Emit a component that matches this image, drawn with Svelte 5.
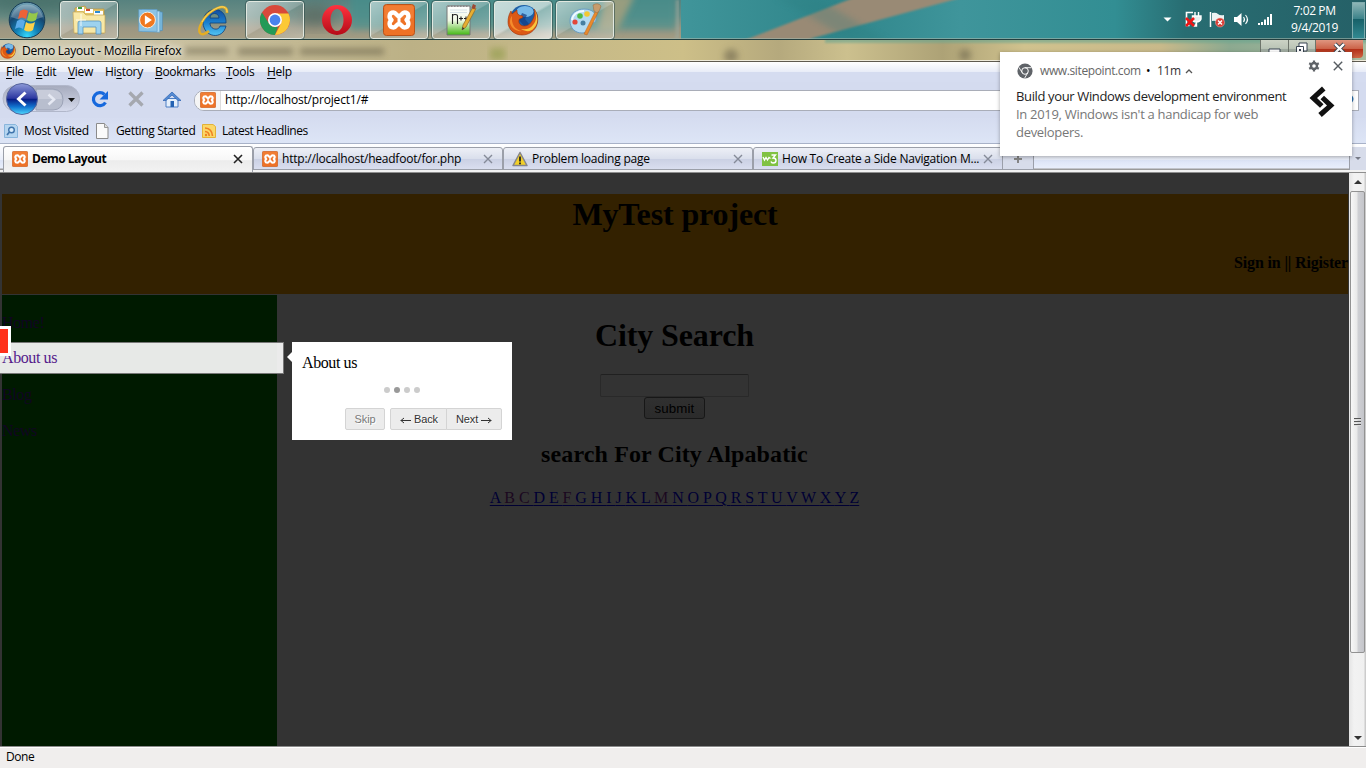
<script>
  const menus = [
    ['', 'F', 'ile', 30], ['', 'E', 'dit', 32], ['', 'V', 'iew', 37], ['Hi', 's', 'tory', 50],
    ['', 'B', 'ookmarks', 71], ['', 'T', 'ools', 41], ['', 'H', 'elp', 40]
  ];
  const letters = 'ABCDEFGHIJKLMNOPQRSTUVWXYZ'.split('');
  const visited = ['B', 'C', 'F', 'M'];
  const tasks = ['explorer', 'wmp', 'ie', 'chrome', 'opera', 'xampp', 'npp', 'firefox', 'paint'];
  const running = ['explorer', 'chrome', 'xampp', 'npp', 'firefox', 'paint'];
  const tabs = [
    { icon: 'xampp', title: 'http://localhost/headfoot/for.php' },
    { icon: 'warn', title: 'Problem loading page' },
    { icon: 'w3', title: 'How To Create a Side Navigation M...' }
  ];
</script>

{#snippet xampp(s)}
  <svg width={s} height={s} viewBox="0 0 32 32">
    <rect x=".5" y=".5" width="31" height="31" rx="3" fill="#ee7226" stroke="#b9531a" />
    <rect x="1.500" y="1.500" width="29" height="13" rx="2" fill="#f58b45" opacity=".45" />
    <path d="M10.500 8.500c-4.500 0-5 5-2 7.500c-3 2.500-2.500 7.500 2 7.500c3 0 2.500-3.500 5.500-3.500s2.500 3.500 5.500 3.500c4.500 0 5-5 2-7.500c3-2.500 2.500-7.500-2-7.500c-3 0-2.500 3.500-5.500 3.500s-2.500-3.500-5.500-3.500z" fill="none" stroke="#fff" stroke-width="4.400" stroke-linejoin="round" />
    <path d="M16 12v8" stroke="#fff" stroke-width="3" />
  </svg>
{/snippet}

{#snippet firefox(s)}
  <svg width={s} height={s} viewBox="0 0 32 32">
    <circle cx="17" cy="15" r="14" fill="#1d5fa6" />
    <ellipse cx="18" cy="7.500" rx="8.500" ry="5.500" fill="#76b9e8" />
    <path d="M15 9l5 2l-2 4l4 5l-4 3l-6-7z" fill="#123d83" opacity=".7" />
    <path d="M27 5c4 5 5 12 2 18c-3 5-8 8-14 8C7 31 1 25 1 18c0-4 1-8 3-11l1 3l5-4c0 2 0 4 2 5c1 1 4 0 4 2c-1 2-4 1-4 3c-1 3 2 6 5 6c5 0 7-3 9-7c2-4 2-7 1-10z" fill="#dc5915" stroke="#9e3108" stroke-width=".6" />
    <path d="M27 5c3 5 3 12-1 16c-3 4-7 5-12 4c5 3 10 3 13-1c5-5 4-13 0-19z" fill="#f7c63e" />
    <path d="M5 12c-1 8 3 14 10 15c-6 1-12-4-12-9c0-3 1-5 2-6z" fill="#f58c2c" />
  </svg>
{/snippet}

{#snippet taskIcon(name)}
  {#if name === 'xampp'}
    {@render xampp(32)}
  {:else if name === 'firefox'}
    {@render firefox(32)}
  {:else if name === 'explorer'}
    <svg width="34" height="32" viewBox="0 0 34 32">
      <path d="M3 4l10-2l2 3h17v24H3z" fill="#e5c566" stroke="#b79440" stroke-width=".7" />
      <path d="M5 3h7v4H5z" fill="#fff" /><path d="M6 3h4v2H6z" fill="#3f9e40" />
      <path d="M13 5h8v4h-8z" fill="#fff" /><path d="M14 5h4v2h-4z" fill="#d34a2d" />
      <path d="M22 7h9v4h-9z" fill="#fff" /><path d="M23 7h5v2h-5z" fill="#2e8bd0" />
      <path d="M1 8h10l3 3h19v18H2z" fill="#f8e8a6" stroke="#c6a658" stroke-width=".7" />
      <path d="M6 30V19q0-2 2-2h19q2 0 2 2v11h-5v-7H11v7z" fill="#9dd2ee" stroke="#5793bd" stroke-width=".8" />
      <path d="M9 10v12M4 16h10" stroke="#fff" stroke-width="1" opacity=".8" />
    </svg>
  {:else if name === 'wmp'}
    <svg width="30" height="28" viewBox="0 0 32 32">
      <path d="M9 4l20 3v21l-20 1z" fill="#78b7dc" stroke="#4b8bb5" stroke-width=".7" />
      <path d="M6 4l20 2v24l-20-1z" fill="#b5dbf0" stroke="#5b9cc6" stroke-width=".7" />
      <path d="M2 4h21v25H2z" fill="#8cc3e4" stroke="#5b99c3" stroke-width=".7" />
      <circle cx="12" cy="16" r="9" fill="#f0781f" stroke="#fff3e2" stroke-width="1" />
      <path d="M9 10.500v11l8-5.500z" fill="#fff" />
    </svg>
  {:else if name === 'ie'}
    <svg width="34" height="34" viewBox="0 0 34 34">
      <defs><linearGradient id="ieb" x1="0" y1="0" x2="0" y2="1"><stop offset="0" stop-color="#124b9e" /><stop offset=".5" stop-color="#1a7fce" /><stop offset="1" stop-color="#52c5f4" /></linearGradient></defs>
      <path d="M30 20H14c0 7 9 8 10 3h6c-3 14-22 12-23-3C7 2 31 2 30 20zM14 15h9c0-6-9-6-9 0z" fill="url(#ieb)" stroke="#0e3f78" stroke-width=".8" />
      <path d="M31 10c1-12-18-4-25 9c-6 11-1 16 7 9" fill="none" stroke="#e4ae24" stroke-width="2.500" />
      <path d="M31 9c0-11-18-3-25 10" fill="none" stroke="#ffe57a" stroke-width=".8" />
    </svg>
  {:else if name === 'chrome'}
    <svg width="30" height="30" viewBox="0 0 30 30">
      <circle cx="15" cy="15" r="15" fill="#d8493b" />
      <path d="M15 30A15 15 0 0 1 2 7.500L9 18.500A7 7 0 0 0 18 21.500z" fill="#239a57" />
      <path d="M15 30A15 15 0 0 0 28.500 8.500H15A7 7 0 0 1 21 18.500z" fill="#fbc936" />
      <circle cx="15" cy="15" r="7" fill="#fff" /><circle cx="15" cy="15" r="5.400" fill="#4a82ee" />
    </svg>
  {:else if name === 'opera'}
    <svg width="30" height="32" viewBox="0 0 30 32">
      <defs><linearGradient id="op" x2="0" y2="1"><stop stop-color="#ff3340" /><stop offset="1" stop-color="#b50b17" /></linearGradient></defs>
      <path fill-rule="evenodd" d="M15 1a15 15 0 0 0 0 30a15 15 0 0 0 0-30zM15 5c4 0 6.500 5 6.500 11s-2.500 11-6.500 11s-6.500-5-6.500-11s2.500-11 6.500-11z" fill="url(#op)" />
    </svg>
  {:else if name === 'npp'}
    <svg width="32" height="32" viewBox="0 0 32 32">
      <defs><linearGradient id="ng" x2="0" y2="1"><stop stop-color="#fff" /><stop offset=".5" stop-color="#f0f9e4" /><stop offset="1" stop-color="#42b713" /></linearGradient></defs>
      <path d="M2 2h23v29H2z" fill="url(#ng)" stroke="#777" />
      <path d="M3 2h21" stroke="#8b8b8b" stroke-width="2" stroke-dasharray="1.500 1.500" />
      <path d="M5 6h17M5 8.500h17" stroke="#c7d5e0" stroke-width=".7" />
      <path d="M7.500 20V10v2q0-1.500 2.500-1.500t2.500 1.500v8M14 14.500h4M16 12.500v4M19 14.500h4M21 12.500v4" fill="none" stroke="#222" stroke-width="1.100" />
      <path d="M28 3l3 1.500l-10 18.500l-4 3l1-5z" fill="#e6ae31" stroke="#8f6624" stroke-width=".7" />
      <path d="M28 0l3 1.500l-1.500 4l-3-1.500z" fill="#9c4934" /><path d="M17.500 23l-.5 3l2.500-1.500z" fill="#333" />
    </svg>
  {:else}
    <svg width="34" height="34" viewBox="0 0 34 34">
      <path d="M2 18C2 10 9 6 16 6c9 0 13 5 12 11c-1 4-5 2-6 5c-1 4-2 8-8 8C7 30 2 25 2 18z" fill="#b4dbf1" stroke="#6a9dc3" />
      <path d="M4 17c1-6 6-9 12-9" fill="none" stroke="#f2fbff" stroke-width="2" />
      <circle cx="7" cy="19" r="2.600" fill="#e2473b" /><circle cx="12" cy="13" r="2.800" fill="#4fb944" />
      <circle cx="19" cy="11" r="2.800" fill="#f3c832" /><circle cx="15" cy="20" r="2.500" fill="#477fa1" />
      <path d="M28 7l2.500 1.500L19 32l-3-1z" fill="#e98a2d" stroke="#b56320" stroke-width=".5" />
      <path d="M25 2q5-3 8 1q-1 5-4 7l-3-2z" fill="#c79c6c" stroke="#94683e" stroke-width=".5" />
    </svg>
  {/if}
{/snippet}

<div class="screen">
  <div class="taskbar">
    <svg class="backdrop" width="1366" height="62" viewBox="0 0 1366 62" preserveAspectRatio="none">
      <defs>
        <filter id="b3" x="-20%" y="-50%" width="140%" height="200%"><feGaussianBlur stdDeviation="3" /></filter>
        <filter id="b1" x="-20%" y="-50%" width="140%" height="200%"><feGaussianBlur stdDeviation="1.200" /></filter>
        <filter id="b8" x="-20%" y="-50%" width="140%" height="200%"><feGaussianBlur stdDeviation="8" /></filter>
        <linearGradient id="left" x2="0" y2="1"><stop stop-color="#57827f" /><stop offset=".4" stop-color="#6b8d85" /><stop offset=".7" stop-color="#9b9682" /><stop offset="1" stop-color="#a49c82" /></linearGradient>
        <linearGradient id="teal"><stop stop-color="#40959a" /><stop offset=".22" stop-color="#2f858a" /><stop offset=".4" stop-color="#3f959b" /><stop offset=".62" stop-color="#328e93" /><stop offset=".72" stop-color="#286d72" /><stop offset="1" stop-color="#255f66" /></linearGradient>
        <linearGradient id="tan"><stop stop-color="#cfcab0" /><stop offset=".12" stop-color="#cbc2a2" /><stop offset=".3" stop-color="#bcb186" /><stop offset=".5" stop-color="#cdbf88" /><stop offset=".57" stop-color="#b5a97d" /><stop offset=".62" stop-color="#ccc08e" /><stop offset=".69" stop-color="#ada276" /><stop offset=".75" stop-color="#d0c28e" /><stop offset=".85" stop-color="#c8b98a" /><stop offset=".9" stop-color="#8ca990" /><stop offset="1" stop-color="#a9bda0" /></linearGradient>
        <clipPath id="bar"><rect width="1366" height="39" /></clipPath>
        <clipPath id="title"><rect y="40" width="1366" height="22" /></clipPath>
      </defs>
      <g clip-path="url(#bar)">
        <rect width="1366" height="40" fill="url(#left)" />
        <ellipse cx="35" cy="0" rx="55" ry="12" fill="#48716b" filter="url(#b8)" />
        <ellipse cx="315" cy="16" rx="20" ry="9" fill="#5b675f" filter="url(#b8)" />
        <rect x="350" y="-10" width="326" height="40" fill="#42918f" opacity=".65" filter="url(#b3)" />
        <path d="M605-5h30l-18 37h-20z" fill="#989d7f" filter="url(#b3)" />
        <rect x="681" y="-10" width="700" height="60" fill="url(#teal)" />
        <path d="M740 42L853-2H960L813 38L800 44z" fill="#998a74" filter="url(#b1)" />
        <path d="M802 12L853 42H890L815-3H775z" fill="#297b7e" opacity=".25" filter="url(#b3)" />
        <path d="M677.500 0V36q0 2-3 2" fill="none" stroke="#9ba99e" stroke-width="4" opacity=".5" filter="url(#b1)" />
      </g>
      <g clip-path="url(#title)">
        <rect y="39" width="1366" height="23" fill="url(#tan)" />
        <rect x="825" y="38" width="560" height="5" fill="#6aa68f" opacity=".6" filter="url(#b1)" />
        <g fill="#68604a" opacity=".55" filter="url(#b3)">
          <rect x="185" y="48" width="43" height="6" /><rect x="238" y="48" width="55" height="7" /><rect x="300" y="48" width="84" height="7" /><circle cx="731" cy="56" r="7" /><circle cx="965" cy="55" r="6" />
        </g>
        <rect x="490" y="48" width="15" height="12" fill="#919c4a" opacity=".6" filter="url(#b3)" />
      </g>
      <path d="M0 38.500H1366" stroke="#a6b7ab" opacity=".6" /><path d="M0 39.500H1366" stroke="#243f3f" />
      <path d="M0 60.500H1366" stroke="#eeeada" /><path d="M0 61.500H1366" stroke="#5f5b50" />
    </svg>
    <div class="start">
      <svg width="38" height="38" viewBox="0 0 38 38">
        <defs><radialGradient id="orb" cx=".5" cy=".95" r=".9"><stop stop-color="#35d8fb" /><stop offset=".35" stop-color="#1280b6" /><stop offset=".7" stop-color="#15466f" /><stop offset="1" stop-color="#6a9bb0" /></radialGradient></defs>
        <circle cx="19" cy="19" r="17.800" fill="url(#orb)" stroke="#173c56" />
        <path d="M3 16A16.500 16.500 0 0 1 35 16Q19 23 3 16z" fill="#fff" opacity=".25" />
        <path d="M12 10q4-3 8 0l-2 8q-4-3-8 0z" fill="#ed6237" /><path d="M21 11q4 3 9 0l-2 8q-5 3-9 0z" fill="#96c84a" />
        <path d="M9 20q4-3 8 0l-2 8q-4-3-8 0z" fill="#5aabe9" /><path d="M18 21q4 3 9 0l-2 8q-4 3-9 0z" fill="#fbd14a" />
      </svg>
    </div>
    {#each tasks as t}
      <div class="task" class:run={running.includes(t)} class:active={t === 'firefox'}>{@render taskIcon(t)}</div>
    {/each}
    <div class="tray">
      <svg width="116" height="20" viewBox="0 0 116 20">
        <path d="M3.500 7.500h8l-4 4z" fill="#fff" />
        <path d="M33 2.500h-6.500v13h3" fill="none" stroke="#fff" stroke-width="1.600" />
        <path d="M35 2v4M38.500 2v4M32.500 6h8.500v3q-1 3-4.500 3q-4 0-4-3zM36.500 12v4h-3" fill="#e8efef" stroke="#fff" stroke-width="1.400" />
        <path d="M26 8l8 8M34 8l-8 8" stroke="#f01414" stroke-width="2.600" />
        <path d="M50.500 2v15" stroke="#fff" stroke-width="1.500" /><path d="M52 3q4-1 6 1t6 1v8q-3 1-6-1t-6-1z" fill="#edf3f3" />
        <circle cx="60" cy="12.500" r="4.500" fill="#d93a32" stroke="#f5bab2" stroke-width=".5" /><path d="M58 10.500l4 4M62 10.500l-4 4" stroke="#fff" stroke-width="1.500" />
        <path d="M74 7h3l4.500-4v13l-4.500-4h-3z" fill="#fff" /><path d="M83.500 7q2 2.500 0 5M85.500 5q4 4.500 0 9" fill="none" stroke="#fff" stroke-width="1.100" />
        <path d="M99 13v2M102 12v3M105 9.500v5.500M108 7v8M111 4v11" stroke="#fff" stroke-width="2" />
      </svg>
      <div class="clock"><span>7:02 PM</span><span>9/4/2019</span></div>
      <div class="peek"></div>
    </div>
  </div>

  <div class="titlebar">
    {@render firefox(16)}
    <span>Demo Layout - Mozilla Firefox</span>
    <div class="winbtns">
      <i><svg width="27" height="18"><path d="M8 9h11v5H8z" fill="#fff" stroke="#384452" /></svg></i>
      <i><svg width="26" height="18"><path d="M10 3h8v8h-8z" fill="#fff" stroke="#384452" /><path d="M7.500 6.500h7v8h-7z" fill="#fff" stroke="#384452" /><path d="M10 9h2v2h-2z" fill="#384452" /></svg></i>
      <i class="close"><svg width="47" height="18"><path d="M19 4l9 9M28 4l-9 9" stroke="#394550" stroke-width="4" /><path d="M19 4l9 9M28 4l-9 9" stroke="#fff" stroke-width="2.400" /></svg></i>
    </div>
  </div>

  <div class="menubar">
    {#each menus as m}<span style:width={m[3] + 'px'}>{m[0]}<u>{m[1]}</u>{m[2]}</span>{/each}
  </div>

  <div class="navbar">
    <svg width="194" height="36" viewBox="0 82 194 36">
      <defs>
        <linearGradient id="bk" x2="0" y2="1"><stop stop-color="#8d9ad9" /><stop offset=".48" stop-color="#2b37a0" /><stop offset=".5" stop-color="#081982" /><stop offset=".75" stop-color="#1173cf" /><stop offset="1" stop-color="#50dafe" /></linearGradient>
        <linearGradient id="pill" x2="0" y2="1"><stop stop-color="#a6abbd" /><stop offset=".5" stop-color="#bdc2d4" /><stop offset="1" stop-color="#d6dbed" /></linearGradient>
      </defs>
      <rect x="3" y="85.500" width="76.500" height="26" rx="13" fill="url(#pill)" stroke="#b1b7ca" />
      <path d="M36 89h17q10 1 10 10.500q0 10-10 10.500H36z" fill="#b8bece" stroke="#9ca3b7" />
      <path d="M37 90h16q9 1 9 9H37z" fill="#d2d6e2" opacity=".6" />
      <circle cx="22" cy="99" r="15.500" fill="url(#bk)" stroke="#53629b" />
      <path d="M25.500 92.500l-7 6.500l7 6.500" fill="none" stroke="#fff" stroke-width="3" />
      <path d="M48.500 94.500l5.500 5l-5.500 5" fill="none" stroke="#e6e9f3" stroke-width="2.500" />
      <path d="M68 98h7l-3.500 4z" fill="#111" />
      <path d="M105.500 102.500A6.500 6.500 0 1 1 104.500 94.500" fill="none" stroke="#1769dd" stroke-width="3.200" /><path d="M108 91v8.500h-8.500z" fill="#1769dd" />
      <path d="M129.500 92.500l13 13M142.500 92.500l-13 13" stroke="#a5a8af" stroke-width="3.300" />
      <path d="M166 98.500h12v8.500h-12z" fill="#e5effb" stroke="#4d7fc5" /><path d="M163 100.500l9-8.500l9 8.500h-3l-6-5.500l-6 5.500z" fill="#568cd4" stroke="#2b61b0" stroke-width=".7" />
      <path d="M170.500 101h3.500v6h-3.500z" fill="#2563b3" />
    </svg>
    <div class="url"><span class="fav">{@render xampp(16)}</span><span>http://localhost/project1/#</span></div>
    <div class="search"><svg width="12" height="14"><circle cx="3" cy="6" r="3.500" fill="none" stroke="#2c70ad" stroke-width="2" /></svg></div>
  </div>

  <div class="bookmarks">
    <svg width="16" height="16" viewBox="0 0 16 16"><path d="M.5 1.500h11l2 2v11H.5z" fill="#b5d5f0" stroke="#88b5dc" /><circle cx="7.500" cy="7" r="2.800" fill="#d9ecfc" stroke="#3f74ac" stroke-width="1.400" /><path d="M5.500 9L3 12" stroke="#3f74ac" stroke-width="1.700" /></svg>
    <span class="bm1">Most Visited</span>
    <svg width="16" height="16" viewBox="0 0 16 16"><path d="M1.500.5h8l3.500 4v11H1.500z" fill="#fafafa" stroke="#8b8b8b" /><path d="M9.500.5V4.500H13" fill="#ddd" stroke="#999" /></svg>
    <span class="bm2">Getting Started</span>
    <svg width="16" height="16" viewBox="0 0 16 16"><path d="M.500 1.500h10.500l2.500 2v11H.500z" fill="#fbd768" stroke="#e2b238" /><path d="M3 5q7 .5 7.500 8M3 8.500q4 .3 4.200 4.500" stroke="#ee8123" stroke-width="1.600" fill="none" /><circle cx="4" cy="12" r="1.200" fill="#ee8123" /></svg>
    <span class="bm3">Latest Headlines</span>
  </div>

  <div class="tabstrip">
    <div class="tab current">{@render xampp(16)}<span>Demo Layout</span><svg class="x" width="10" height="10"><path d="M1 1l8 8M9 1L1 9" stroke="#222" stroke-width="1.600" /></svg></div>
    {#each tabs as t}
      <div class="tab">
        {#if t.icon === 'xampp'}{@render xampp(16)}
        {:else if t.icon === 'warn'}<svg width="16" height="16"><path d="M8 1.500L15 14.500H1z" fill="#f2cf27" stroke="#85858c" stroke-width="1.500" stroke-linejoin="round" /><path d="M8 5.500v5M8 11.500v1.800" stroke="#222" stroke-width="1.800" /></svg>
        {:else}<svg width="16" height="16"><rect y="1" width="16" height="14" fill="#80c242" /><path d="M1 6l1.500 3L4 6.500L5.500 9L7 6.500L8.500 7.500M9.500 4h4l-2.500 3q3 0 3 2.500t-3 2.500q-1.500 0-2-1.500" fill="none" stroke="#fff" stroke-width="1.400" /></svg>{/if}
        <span class="t-{t.icon}">{t.title}</span>
        <svg class="x" width="10" height="10"><path d="M1 1l8 8M9 1L1 9" stroke="#858a98" stroke-width="1.400" /></svg>
      </div>
    {/each}
    <div class="newtab"><svg width="10" height="10"><path d="M1 5h8M5 1v8" stroke="#858585" stroke-width="2" /></svg></div>
    <div class="alltabs"><svg width="8" height="5"><path d="M1 1h6L4 4z" fill="#777b87" /></svg></div>
  </div>

  <div class="view">
    <div class="page">
      <header><h1>MyTest project</h1><div class="sign">Sign in || Rigister</div></header>
      <div class="cols">
        <nav><a href="#home">Home!</a><a href="#about">About us</a><a href="#blog">Blog</a><a href="#news">News</a></nav>
        <main>
          <h1>City Search</h1>
          <input type="text" aria-label="City" />
          <button class="submit">submit</button>
          <h2>search For City Alpabatic</h2>
          <div class="letters">{#each letters as l, i}<a href="#{l}" class:seen={visited.includes(l)}>{l}{i < 25 ? ' ' : ''}</a>{/each}</div>
        </main>
      </div>
      <div class="highlight">About us</div>
      <div class="step">2</div>
      <div class="tip">
        <div class="arrow"></div>
        <div class="tiptext">About us</div>
        <div class="dots"><i></i><i class="on"></i><i></i><i></i></div>
        <div class="btns"><span class="skip">Skip</span><span class="back"><svg width="11" height="7"><path d="M.5 3.500H11M4 1L1 3.500L4 6" fill="none" stroke="#333" /></svg>Back</span><span class="next">Next<svg width="11" height="7"><path d="M0 3.500H10.500M7 1l3 2.500L7 6" fill="none" stroke="#333" /></svg></span></div>
      </div>
    </div>
    <div class="scroll">
      <svg width="16" height="18"><path d="M5 11l4-4l4 4z" fill="#333" /></svg>
      <div class="thumb"><svg width="8" height="9"><path d="M0 .5h7M0 3.500h7M0 6.500h7" stroke="#555" /><path d="M0 1.500h7M0 4.500h7M0 7.500h7" stroke="#ddd" /></svg></div>
      <svg width="16" height="18"><path d="M5 8l4 4l4-4z" fill="#333" /></svg>
    </div>
  </div>
  <div class="status">Done</div>

  <div class="toast">
    <div class="src">
      <svg width="16" height="16" viewBox="0 0 16 16"><circle cx="8" cy="8" r="7.600" fill="#5f6368" /><circle cx="8" cy="8" r="3.300" fill="none" stroke="#fff" /><path d="M8 4.700h6.500M5.200 9.700L1.900 4.300M10.800 9.700L7.600 15.200" stroke="#fff" stroke-width=".9" /></svg>
      <span class="site">www.sitepoint.com</span><span class="bull">•</span><span class="age">11m</span>
      <svg width="8" height="6"><path d="M1 5l3-3l3 3" fill="none" stroke="#555" stroke-width="1.300" /></svg>
      <svg class="gear" width="12" height="12" viewBox="0 0 12 12"><circle cx="6" cy="6" r="3" fill="none" stroke="#5f6368" stroke-width="2.400" /><path d="M6 .5v2M6 9.500v2M1.200 3.200l1.800 1M9 7.800l1.800 1M1.200 8.800l1.800-1M9 4.200l1.800-1" stroke="#5f6368" stroke-width="2.200" /></svg>
      <svg width="10" height="10"><path d="M.8.8l8.400 8.400M9.200.8L.8 9.200" stroke="#555b60" stroke-width="1.400" /></svg>
    </div>
    <div class="msg">
      <div class="lines"><span class="head">Build your Windows development environment</span><span class="l1">In 2019, Windows isn't a handicap for web</span><span class="l2">developers.</span></div>
      <svg width="26" height="32" viewBox="0 0 26 32"><path d="M13 .5l3.500 4L8 12l6.500 6.300l-3.500 3.500L.5 12zM12.800 31l-3.500-4l8.700-7.500l-6.500-6.300l3.500-3.500L25.500 19.500z" fill="#111" /></svg>
    </div>
  </div>
</div>

<style>
  :global(body) { overflow: hidden; }
  .screen { position: relative; width: 1366px; height: 768px; display: flex; flex-direction: column; font: 12px/16px "Open Sans", "Noto Sans", sans-serif; letter-spacing: -.3px; color: #000; background: #f0eeed; overflow: hidden; white-space: nowrap; }
  svg { display: block; flex: none; }
  .taskbar { position: relative; height: 40px; flex: none; display: flex; align-items: stretch; }
  .backdrop { position: absolute; left: 0; top: 0; }
  .start { width: 58px; display: flex; align-items: center; padding-left: 8px; box-sizing: border-box; position: relative; }
  .task { width: 58px; height: 38px; margin: 1px 2px; box-sizing: border-box; display: flex; align-items: center; justify-content: center; position: relative; border-radius: 3px; }
  .run { border: 1px solid #e1e8e0; outline: 1px solid #29474788; background: linear-gradient(150deg, #ffffff88 0, #ffffff48 48%, #ffffff20 50%, #ffffff45 100%); }
  .active { background: linear-gradient(150deg, #ffffffb0 0, #ffffff99 48%, #ffffff60 52%, #ffffffa8 100%); }
  .tray { margin-left: auto; display: flex; align-items: center; position: relative; color: #fff; }
  .clock { width: 75px; padding-left: 1px; display: flex; flex-direction: column; align-items: center; line-height: 17px; letter-spacing: -.38px; transform: translateY(-1px); }
  .peek { width: 13px; height: 37px; margin-right: 1px; box-sizing: border-box; border: 1px solid #7facae; background: linear-gradient(#8eb5b6, #3b8289 45%, #176068 46%, #328991); }
  .titlebar { height: 22px; flex: none; display: flex; align-items: center; position: relative; gap: 6px; }
  .titlebar span { text-shadow: 0 0 6px #fff, 0 0 8px #fff; letter-spacing: -.22px; }
  .winbtns { margin: 0 3px 4px auto; display: flex; height: 18px; }
  .winbtns i { border-left: 1px solid #6e756b; background: linear-gradient(#ccd3c5, #b9c3b5 50%, #9da99e 50%, #b9c2b5); }
  .winbtns .close { background: linear-gradient(#df9680, #cc6349 48%, #b32f18 50%, #cf6744); border-radius: 0 0 4px; }
  .menubar { height: 20px; flex: none; display: flex; align-items: center; padding-left: 6px; background: linear-gradient(#fff, #e9edf8 48%, #d5dcf0 50%, #d5dcf0); }
  .menubar span { flex: none; }
  u { text-underline-offset: 2px; }
  .navbar { height: 36px; flex: none; display: flex; align-items: center; background: #d4dbef; }
  .url { width: 900px; height: 21px; box-sizing: border-box; border: 1px solid #a9adb8; border-radius: 10px 0 0 10px; background: #fff; display: flex; align-items: center; overflow: hidden; letter-spacing: -.18px; }
  .fav { padding: 0 4px 0 5px; background: #f5f5f5; border-right: 1px solid #ddd; margin-right: 4px; height: 21px; display: flex; align-items: center; }
  .search { margin: 0 7px 0 auto; width: 230px; height: 21px; box-sizing: border-box; border: 1px solid #a9adb8; background: #fff; display: flex; justify-content: flex-end; align-items: center; }
  .bookmarks { height: 25px; flex: none; display: flex; align-items: center; padding-left: 4px; background: linear-gradient(#d5dcf0, #dde5f6); border-bottom: 1px solid #a8b2c8; gap: 4px; }
  .bm1 { width: 67px; } .bm2 { width: 82px; margin-left: 1px; letter-spacing: -.36px; } .bm3 { letter-spacing: -.42px; }
  .tabstrip { height: 29px; flex: none; box-sizing: border-box; display: flex; align-items: flex-start; padding: 3px 0 0 3px; background: linear-gradient(#fff, #e9eefa 55%, #dce4f6 57%, #e8eefb 24px, #9a9a9a 25px, #9a9a9a 26px, #f2f2f2 26px, #f2f2f2 28px, #8e8e8e 28px); }
  .tab { width: 250px; height: 23px; box-sizing: border-box; border: 1px solid #9b9fa9; border-radius: 3px 3px 0 0; padding: 0 9px 0 8px; display: flex; align-items: center; gap: 4px; background: linear-gradient(#edeff6, #dadfec 50%, #cad0e3 52%, #d9deef); letter-spacing: -.22px; }
  .tab .x { margin-left: auto; }
  .current { height: 26px; padding-bottom: 2px; margin-top: -1px; background: linear-gradient(#fff, #f7f7f7 50%, #ececec 55%, #f2f2f2); border-bottom: 0; font-weight: 700; letter-spacing: -.5px; }
  .newtab { width: 31px; height: 23px; box-sizing: border-box; border: 1px solid #9b9fa9; border-left: 0; display: flex; align-items: center; justify-content: center; background: #d7dcea; }
  .alltabs { margin-left: auto; width: 16px; height: 23px; border-left: 1px solid #9b9fa9; display: flex; align-items: center; justify-content: center; background: #d7dcea; }
  .view { height: 573px; flex: none; display: flex; }
  .page { position: relative; width: 1349px; background: #333; box-sizing: border-box; padding: 21px 2px 0; font: 16px/18px "Liberation Serif", serif; letter-spacing: 0; display: flex; flex-direction: column; }
  header { width: 1346px; height: 100px; background: #332100; }
  h1 { margin: 0; font-size: 32px; line-height: 38px; text-align: center; letter-spacing: -.13px; }
  header h1 { padding-top: 1px; }
  .sign { margin-top: 21px; text-align: right; font-weight: 700; letter-spacing: -.15px; }
  .cols { flex: 1; display: flex; margin-top: 1px; }
  nav { width: 275px; background: #001a00; padding-top: 19px; display: flex; flex-direction: column; gap: 18px; box-sizing: border-box; letter-spacing: -.4px; }
  a { color: #110522; text-decoration: none; }
  main { display: flex; flex-direction: column; align-items: center; width: 795px; padding-top: 21px; }
  input { width: 149px; height: 23px; margin: 20px 0 0; box-sizing: border-box; border: 1px solid #292929; border-top-color: #202020; border-radius: 2px; background: #333; }
  .submit { width: 61px; height: 22px; padding: 0; border: 1px solid #171717; border-radius: 3px; background: linear-gradient(#303030, #2b2b2b); font: 13.300px "Liberation Sans", sans-serif; letter-spacing: .1px; color: #000; }
  h2 { margin: 21px 0 0; font-size: 24px; line-height: 28px; letter-spacing: .12px; }
  .letters { margin-top: 21px; white-space: pre; }
  .letters a { color: #000033; text-decoration: underline; text-underline-offset: 2px; letter-spacing: -.06px; }
  .letters .seen { color: #1b0820; text-decoration-color: #000033; }
  .highlight { position: absolute; left: -1px; top: 169px; width: 285px; height: 32px; box-sizing: border-box; border: 1px solid #777; background: linear-gradient(90deg, #e7e9e7 277px, #ebebeb 277px); color: #551a8b; padding: 6px 0 0 2px; letter-spacing: -.4px; }
  .step { position: absolute; left: -19px; top: 153px; width: 30px; height: 30px; box-sizing: border-box; border: 3px solid #fff; background: #ff3019; color: #b22011; font: 13px/24px "Liberation Sans", sans-serif; padding-left: 9px; }
  .tip { position: absolute; left: 292px; top: 169px; width: 220px; height: 98px; box-sizing: border-box; padding: 12px 10px 10px; background: #fff; display: flex; flex-direction: column; }
  .tiptext { letter-spacing: -.4px; }
  .arrow { position: absolute; left: -5px; top: 10px; border: 5px solid transparent; border-right-color: #fff; border-left: 0; }
  .dots { display: flex; justify-content: center; gap: 4px; margin-top: 15px; }
  .dots i { width: 6px; height: 6px; border-radius: 50%; background: #ccc; }
  .dots .on { background: #999; }
  .btns { display: flex; justify-content: flex-end; margin-top: 15px; font: 11px/20px "Liberation Sans", sans-serif; letter-spacing: -.1px; color: #333; }
  .btns span { box-sizing: border-box; height: 22px; border: 1px solid #d4d4d4; background: #ececec; border-radius: 2px; text-shadow: 1px 1px 0 #fff; display: flex; align-items: center; justify-content: center; gap: 3px; }
  .btns svg { margin-top: 2px; }
  .btns .skip { width: 40px; color: #7a7a7a; margin-right: 5px; }
  .btns .back { width: 57px; border-radius: 2px 0 0 2px; padding-left: 1px; } .btns .next { width: 56px; margin-left: -1px; border-radius: 0 2px 2px 0; }
  .scroll { width: 17px; background: linear-gradient(90deg, #e4e4e4, #f2f2f2 5px, #f0f0f0 15px, #ccc 16px); display: flex; flex-direction: column; }
  .thumb { height: 462px; width: 15px; margin-left: 1px; box-sizing: border-box; border: 1px solid #929292; border-radius: 2px; background: linear-gradient(90deg, #f7f7f7, #e8e8e8 48%, #cfd0d4 52%, #c4c5ca); display: flex; align-items: center; justify-content: center; }
  .scroll > svg:last-child { margin-top: auto; }
  .status { height: 22px; box-sizing: border-box; border-top: 1px solid #8b8b8b; box-shadow: inset 0 1px #fff; padding: 2px 6px; letter-spacing: -.45px; }
  .toast { position: absolute; left: 1000px; top: 52px; width: 352px; height: 104px; background: #fff; box-sizing: border-box; padding: 8px 10px 0 16px; box-shadow: 0 1px 4px #0005; font-size: 13px; line-height: 18px; display: flex; flex-direction: column; }
  .src { display: flex; align-items: center; height: 22px; font-size: 12px; }
  .src > svg:first-child { margin-left: 1px; }
  .site { color: #666; width: 102px; margin-left: 7px; letter-spacing: -.4px; font-size: 12px; }
  .site { letter-spacing: -.38px; }
  .bull { width: 11px; margin-left: 4px; } .age { width: 24px; margin-right: 4px; letter-spacing: -.3px; color: #333; }
  .gear { margin: -10px 13px 0 auto; }
  .gear + svg { margin: -10px -1px 0 0; }
  .msg { display: flex; justify-content: space-between; margin-top: 5px; }
  .msg svg { margin: -1px 7px 0 0; }
  .lines { display: flex; flex-direction: column; color: #777; letter-spacing: -.3px; }
  .head { color: #222; letter-spacing: -.36px; }
</style>
